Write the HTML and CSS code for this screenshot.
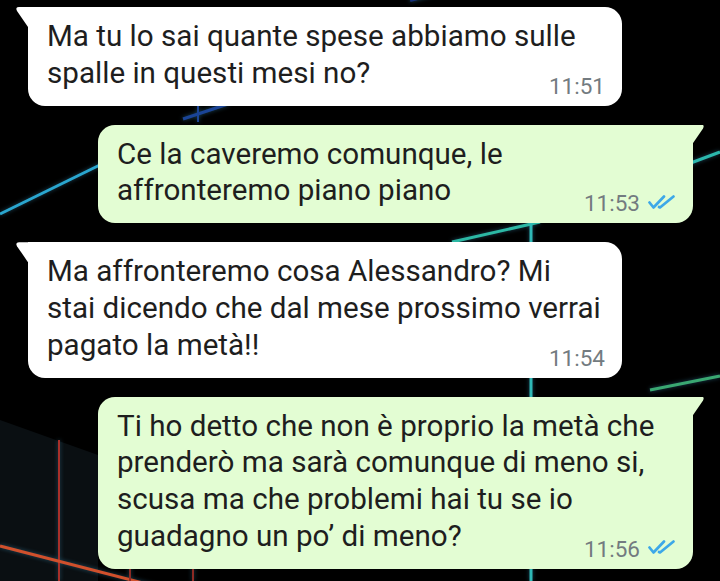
FILE: index.html
```html
<!DOCTYPE html>
<html lang="it">
<head>
    <meta charset="UTF-8">
    <meta name="viewport" content="width=device-width, initial-scale=1.0">
    <title>Chat</title>
    <link rel="stylesheet" href="styles.css">
</head>
<body>
    <!-- Wallpaper: neon lines behind the chat -->
    <div class="wallpaper">
        <svg width="720" height="581" viewBox="0 0 720 581">
            <polygon points="0,420 98,455 98,581 0,581" fill="#0a0f12"/>
            <g class="glow">
                <line x1="183" y1="119" x2="228" y2="104" stroke="#1a4496" stroke-width="3"/>
                <line x1="198" y1="106" x2="198" y2="122" stroke="#1a4496" stroke-width="2"/>
                <line x1="410" y1="0" x2="432" y2="-6" stroke="#16307a" stroke-width="4"/>
                <line x1="0" y1="214" x2="110" y2="160" stroke="#2aa6cf" stroke-width="3"/>
                <line x1="680" y1="167" x2="720" y2="152" stroke="#2cb8ad" stroke-width="3"/>
                <line x1="452" y1="242" x2="540" y2="222" stroke="#2cb8a4" stroke-width="3"/>
                <line x1="531" y1="215" x2="531" y2="581" stroke="#2fb8b6" stroke-width="3"/>
                <line x1="650" y1="390" x2="720" y2="376" stroke="#3aa872" stroke-width="3"/>
                <line x1="59" y1="440" x2="59" y2="581" stroke="#a8302a" stroke-width="2"/>
                <line x1="0" y1="546" x2="170" y2="590" stroke="#d0502c" stroke-width="3"/>
                <line x1="130" y1="560" x2="130" y2="581" stroke="#8c2a24" stroke-width="2"/>
                <line x1="193" y1="560" x2="193" y2="581" stroke="#8c2a24" stroke-width="2"/>
            </g>
        </svg>
    </div>

    <div class="chat">
        <div class="msg in">
            <p class="text">Ma tu lo sai quante spese abbiamo sulle<br>spalle in questi mesi no?</p>
            <div class="meta"><span class="time">11:51</span></div>
        </div>

        <div class="msg out">
            <p class="text">Ce la caveremo comunque, le<br>affronteremo piano piano</p>
            <div class="meta">
                <span class="time">11:53</span>
                <svg class="ticks" width="27" height="14" viewBox="0 0 27 14">
                    <path d="M1.5 7.5 L5.5 12.5 L16 1.5 M11 12 L12 12.5 L25.5 1.5" fill="none" stroke="#3da8e8" stroke-width="2.7" stroke-linecap="round" stroke-linejoin="round"/>
                </svg>
            </div>
        </div>

        <div class="msg in">
            <p class="text">Ma affronteremo cosa Alessandro? Mi<br>stai dicendo che dal mese prossimo verrai<br>pagato la metà!!</p>
            <div class="meta"><span class="time">11:54</span></div>
        </div>

        <div class="msg out">
            <p class="text">Ti ho detto che non è proprio la metà che<br>prenderò ma sarà comunque di meno si,<br>scusa ma che problemi hai tu se io<br>guadagno un po’ di meno?</p>
            <div class="meta">
                <span class="time">11:56</span>
                <svg class="ticks" width="27" height="14" viewBox="0 0 27 14">
                    <path d="M1.5 7.5 L5.5 12.5 L16 1.5 M11 12 L12 12.5 L25.5 1.5" fill="none" stroke="#3da8e8" stroke-width="2.7" stroke-linecap="round" stroke-linejoin="round"/>
                </svg>
            </div>
        </div>
    </div>
</body>
</html>
```

FILE: styles.css
```css
/* Chat screenshot */
body {
    margin: 0;
    width: 720px;
    height: 581px;
    overflow: hidden;
    background: #000;
    font-family: Roboto, "Noto Sans", sans-serif;
}

.wallpaper {
    position: absolute;
    top: 0;
    left: 0;
    z-index: 0;
}

.wallpaper svg {
    display: block;
}

.glow {
    filter: drop-shadow(0 0 2px rgba(80, 200, 255, 0.35));
}

.chat {
    position: relative;
    z-index: 1;
    display: flex;
    flex-direction: column;
    gap: 19px;
    padding-top: 7px;
}

.msg {
    position: relative;
    box-sizing: border-box;
    padding: 11px 17px 9px 19px;
    border-radius: 17px;
}

.msg.in {
    background: #fff;
    margin-left: 28px;
    width: 594px;
    border-top-left-radius: 0;
}

.msg.out {
    background: #e3fdd3;
    margin-left: 98px;
    width: 595px;
    padding-right: 18px;
    border-top-right-radius: 0;
}

/* bubble tails */
.msg.in::before,
.msg.out::before {
    content: "";
    position: absolute;
    top: 0;
    width: 12px;
    height: 20px;
}

.msg.in::before {
    left: -12px;
    background: #fff;
    clip-path: path('M3 0 H12 V20 L1 4 Q-1 0 3 0 Z');
}

.msg.out::before {
    right: -11px;
    background: #e3fdd3;
    clip-path: path('M9 0 H0 V20 L11 4 Q13 0 9 0 Z');
}

.text {
    margin: 0;
    font-size: 29.6px;
    line-height: 36.8px;
    color: #1e1e1e;
}

.meta {
    display: flex;
    justify-content: flex-end;
    align-items: center;
    gap: 8px;
    margin-top: -17px;
    font-size: 22.5px;
    line-height: 22px;
    color: #737b80;
}

.ticks {
    display: block;
    margin-bottom: 3px;
}
```
